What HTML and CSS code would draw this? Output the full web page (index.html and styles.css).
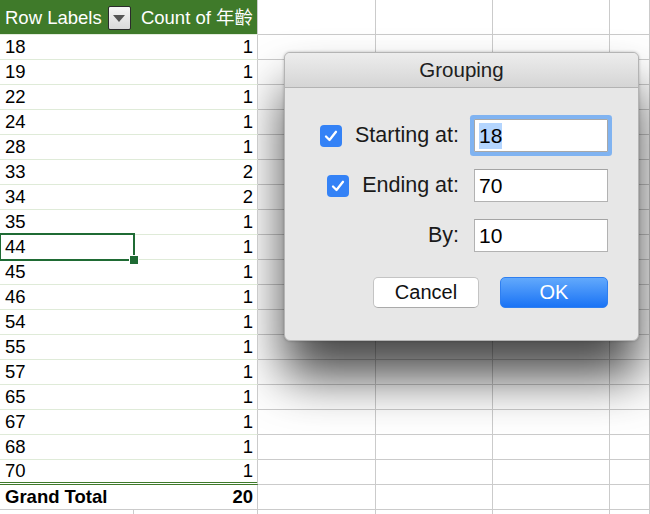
FILE: index.html
```html
<!DOCTYPE html>
<html>
<head>
<meta charset="utf-8">
<link rel="stylesheet" href="styles.css">
</head>
<body>
<div class="sheet">
  <div class="ph ph-a"><span>Row Labels</span><span class="dd"><span class="tri"></span></span></div>
  <div class="ph ph-b">Count of 年齡</div>
  <div class="e"></div><div class="e"></div><div class="e"></div><div class="e"></div>

  <div class="pl">18</div><div class="pv">1</div><div class="e"></div><div class="e"></div><div class="e"></div><div class="e"></div>
  <div class="pl">19</div><div class="pv">1</div><div class="e"></div><div class="e"></div><div class="e"></div><div class="e"></div>
  <div class="pl">22</div><div class="pv">1</div><div class="e"></div><div class="e"></div><div class="e"></div><div class="e"></div>
  <div class="pl">24</div><div class="pv">1</div><div class="e"></div><div class="e"></div><div class="e"></div><div class="e"></div>
  <div class="pl">28</div><div class="pv">1</div><div class="e"></div><div class="e"></div><div class="e"></div><div class="e"></div>
  <div class="pl">33</div><div class="pv">2</div><div class="e"></div><div class="e"></div><div class="e"></div><div class="e"></div>
  <div class="pl">34</div><div class="pv">2</div><div class="e"></div><div class="e"></div><div class="e"></div><div class="e"></div>
  <div class="pl">35</div><div class="pv">1</div><div class="e"></div><div class="e"></div><div class="e"></div><div class="e"></div>
  <div class="pl sel">44<span class="handle"></span></div><div class="pv">1</div><div class="e"></div><div class="e"></div><div class="e"></div><div class="e"></div>
  <div class="pl">45</div><div class="pv">1</div><div class="e"></div><div class="e"></div><div class="e"></div><div class="e"></div>
  <div class="pl">46</div><div class="pv">1</div><div class="e"></div><div class="e"></div><div class="e"></div><div class="e"></div>
  <div class="pl">54</div><div class="pv">1</div><div class="e"></div><div class="e"></div><div class="e"></div><div class="e"></div>
  <div class="pl">55</div><div class="pv">1</div><div class="e"></div><div class="e"></div><div class="e"></div><div class="e"></div>
  <div class="pl">57</div><div class="pv">1</div><div class="e"></div><div class="e"></div><div class="e"></div><div class="e"></div>
  <div class="pl">65</div><div class="pv">1</div><div class="e"></div><div class="e"></div><div class="e"></div><div class="e"></div>
  <div class="pl">67</div><div class="pv">1</div><div class="e"></div><div class="e"></div><div class="e"></div><div class="e"></div>
  <div class="pl">68</div><div class="pv">1</div><div class="e"></div><div class="e"></div><div class="e"></div><div class="e"></div>
  <div class="pl last">70</div><div class="pv last">1</div><div class="e"></div><div class="e"></div><div class="e"></div><div class="e"></div>
  <div class="pl gt">Grand Total</div><div class="pv gt">20</div><div class="e"></div><div class="e"></div><div class="e"></div><div class="e"></div>

  <div class="e"></div><div class="e"></div><div class="e"></div><div class="e"></div><div class="e"></div><div class="e"></div>
</div>

<div class="dialog">
  <div class="titlebar">Grouping</div>
  <div class="dbody">
    <div class="form">
      <div class="lab">
        <span class="cb"><svg width="22" height="22" viewBox="0 0 22 22"><path d="M6 11.5 L9.5 15 L16 6.8" fill="none" stroke="#fff" stroke-width="2.3" stroke-linecap="round" stroke-linejoin="round"/></svg></span>
        <span>Starting at:</span>
      </div>
      <div class="field focus"><span class="hl">18</span></div>

      <div class="lab">
        <span class="cb"><svg width="22" height="22" viewBox="0 0 22 22"><path d="M6 11.5 L9.5 15 L16 6.8" fill="none" stroke="#fff" stroke-width="2.3" stroke-linecap="round" stroke-linejoin="round"/></svg></span>
        <span>Ending at:</span>
      </div>
      <div class="field">70</div>

      <div class="lab"><span>By:</span></div>
      <div class="field">10</div>
    </div>
    <div class="buttons">
      <div class="btn cancel">Cancel</div>
      <div class="btn ok">OK</div>
    </div>
  </div>
</div>
</body>
</html>
```

FILE: styles.css
```css
html, body {
  margin: 0;
  padding: 0;
}
body {
  width: 650px;
  height: 514px;
  overflow: hidden;
  background: #ffffff;
  font-family: "Liberation Sans", Arial, "Noto Sans CJK TC", sans-serif;
  color: #000;
  position: relative;
}

.sheet {
  display: grid;
  grid-template-columns: 134px 124px 118px 117px 117px 40px;
  grid-template-rows: 35px repeat(20, 25px);
}

.e {
  box-sizing: border-box;
  border-right: 1px solid #cbcbcb;
  border-bottom: 1px solid #cbcbcb;
}

.ph, .pl, .pv {
  position: relative;
  z-index: 2;
  box-sizing: border-box;
  font-size: 18.5px;
  display: flex;
  align-items: center;
  white-space: nowrap;
}

.ph {
  background: #3f7a2a;
  color: #fff;
  border-bottom: 1px solid #e3ecdd;
  align-items: flex-end;
  padding-bottom: 5px;
}
.ph-a {
  padding-left: 5px;
  gap: 6px;
}
.ph-b {
  justify-content: flex-end;
  padding-right: 4px;
  border-right: 1px solid #cbcbcb;
}

.dd {
  width: 23px;
  height: 24px;
  box-sizing: border-box;
  border: 1px solid #2b2b2b;
  border-radius: 2px;
  background: linear-gradient(#f6f6f6, #d9d9d9);
  display: flex;
  align-items: center;
  justify-content: center;
  margin-bottom: -1px;
}
.tri {
  width: 0;
  height: 0;
  border-left: 6px solid transparent;
  border-right: 6px solid transparent;
  border-top: 7px solid #555;
  margin-top: 1px;
}

.pl {
  background: #fff;
  padding-left: 5px;
  border-bottom: 1px solid #dfebd8;
}
.pv {
  background: #fff;
  justify-content: flex-end;
  padding-right: 4px;
  border-bottom: 1px solid #dfebd8;
  border-right: 1px solid #cbcbcb;
}
.last {
  border-bottom: 3px double #3f7a2a;
}
.gt {
  font-weight: bold;
  border-bottom: 1px solid #cbcbcb;
}

.pl.sel {
  z-index: 4;
}
.sel::after {
  content: "";
  position: absolute;
  left: -1px;
  top: -2px;
  right: -1px;
  bottom: -2px;
  border: 2px solid #1f6b34;
  pointer-events: none;
}
.handle {
  position: absolute;
  width: 8px;
  height: 8px;
  right: -5px;
  bottom: -6px;
  background: #1f6b34;
  border: 1px solid #fff;
  z-index: 5;
}

/* Dialog */
.dialog {
  position: absolute;
  left: 284px;
  top: 52px;
  width: 355px;
  height: 289px;
  box-sizing: border-box;
  border: 1px solid #b4b4b4;
  border-radius: 6px;
  background: #e7e7e7;
  z-index: 1;
  box-shadow: 0 36px 50px rgba(0, 0, 0, 0.72), 0 0 3px rgba(0, 0, 0, 0.25);
  overflow: hidden;
  display: flex;
  flex-direction: column;
}
.titlebar {
  height: 35px;
  box-sizing: border-box;
  background: linear-gradient(#ededed, #d5d5d5);
  border-bottom: 1px solid #b3b3b3;
  display: flex;
  align-items: center;
  justify-content: center;
  font-size: 20.5px;
  color: #202020;
}
.dbody {
  padding: 31px 30px 0 20px;
  display: flex;
  flex-direction: column;
}
.form {
  display: grid;
  grid-template-columns: 1fr 134px;
  grid-auto-rows: 33px;
  column-gap: 15px;
  row-gap: 17px;
}
.lab {
  display: flex;
  align-items: center;
  justify-content: flex-end;
  gap: 13px;
  font-size: 21.5px;
  color: #1a1a1a;
}
.cb {
  width: 22px;
  height: 22px;
  border-radius: 4px;
  background: #3482f6;
  display: flex;
}
.field {
  box-sizing: border-box;
  height: 33px;
  background: #fff;
  border: 1px solid #b2b2b2;
  border-top-color: #a4a4a4;
  font-size: 21px;
  display: flex;
  align-items: center;
  padding-left: 4px;
}
.field.focus {
  border-color: #a8a8a8;
  box-shadow: 0 0 0 4px #80b3f1;
  border-radius: 1px;
}
.hl {
  background: #b4d5fe;
  padding: 1px 0;
}
.buttons {
  display: flex;
  justify-content: flex-end;
  gap: 21px;
  margin-top: 25px;
}
.btn {
  height: 31px;
  box-sizing: border-box;
  border-radius: 5px;
  display: flex;
  align-items: center;
  justify-content: center;
  font-size: 20px;
}
.cancel {
  width: 106px;
  background: #fff;
  border: 1px solid #c4c4c4;
  border-bottom-color: #aaaaaa;
  color: #111;
}
.ok {
  width: 108px;
  background: linear-gradient(#62a9fc, #1a73f5);
  border: 1px solid #2f7ff0;
  color: #fff;
}
```
